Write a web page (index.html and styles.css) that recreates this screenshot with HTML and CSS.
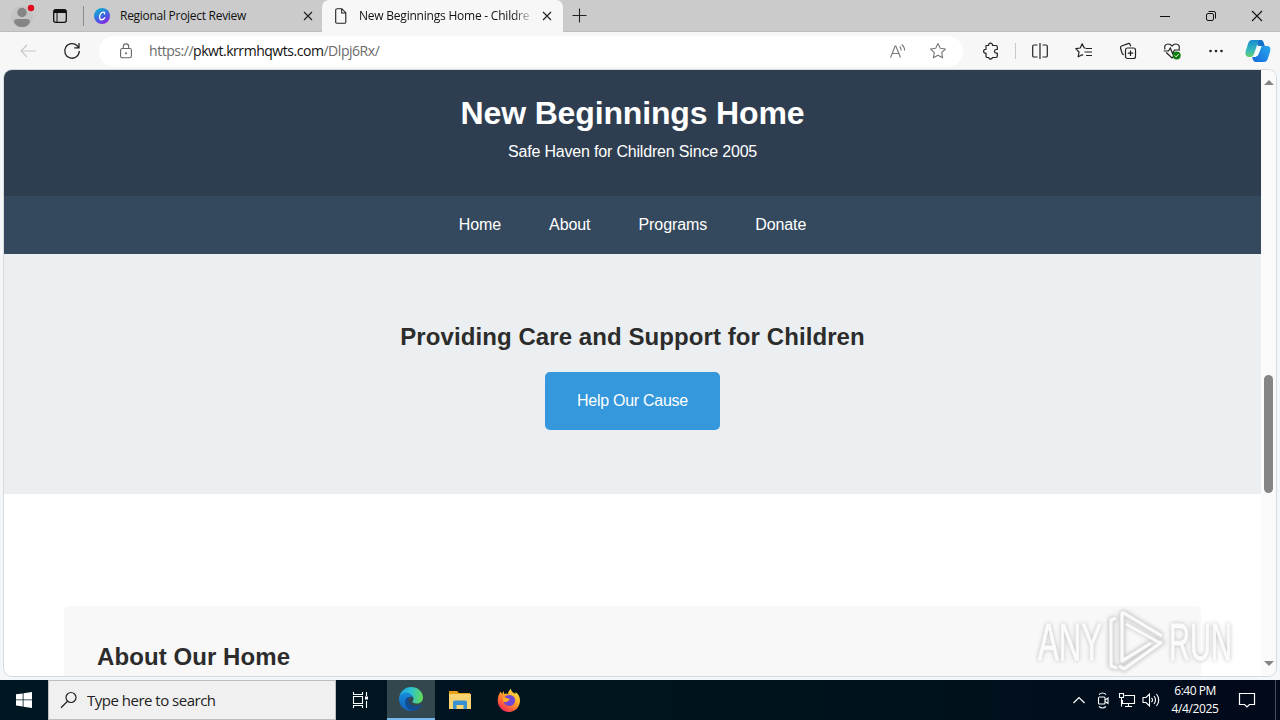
FILE: index.html
```html
<!DOCTYPE html>
<html lang="en">
<head>
<meta charset="utf-8">
<title>New Beginnings Home - Children</title>
<link rel="stylesheet" href="styles.css">
</head>
<body>
<div class="desktop">
  <div class="titlebar">
    <svg class="profile" width="28" height="32" viewBox="0 0 28 32"><circle cx="14" cy="17" r="11" fill="#c4c4c4"/><circle cx="14" cy="12.500" r="4.700" fill="#858585"/><path d="M6 22q0-3 3-3h10q3 0 3 3-2 5-8 5t-8-5z" fill="#858585"/><circle cx="23" cy="8" r="3.200" fill="#e00b1c"/></svg>
    <svg class="workspaces" width="16" height="16" viewBox="0 0 16 16"><rect x="1.700" y="1.700" width="12.600" height="12.600" rx="2" fill="none" stroke="#111" stroke-width="1.300"/><path d="M2 2h12v3H2zM2 4h3v1H2z" fill="#111"/><path d="M5 5v9" stroke="#111"/></svg>
    <span class="tab-divider"></span>
    <div class="tab">
      <svg class="favicon" width="16" height="16" viewBox="0 0 16 16"><defs><linearGradient id="canva" x1="0" y1="0" x2=".6" y2="1"><stop offset="0" stop-color="#08c3cc"/><stop offset=".5" stop-color="#2f77df"/><stop offset="1" stop-color="#8129e5"/></linearGradient></defs><circle cx="8" cy="8" r="8" fill="url(#canva)"/><path d="M10.500 5.800c.6-1.600-1.200-2.300-2.700-1.200C5.700 6.100 5 9.200 6 10.800s3.200 1 4.700-1" fill="none" stroke="#fff" stroke-width="1.300" stroke-linecap="round"/></svg>
      <span class="tab-title tab-title-first">Regional Project Review</span>
      <svg class="tab-close" width="10" height="10" viewBox="0 0 10 10"><path d="M1 1l8 8M9 1L1 9" stroke="#222" stroke-width="1.200"/></svg>
    </div>
    <div class="tab tab-active">
      <svg class="favicon" width="16" height="16" viewBox="0 0 16 16"><path d="M3.500.7h5.300l4 4v9.200q0 1.400-1.400 1.400h-7.400Q2.700 15.300 2.700 14V2q0-1.300 1.300-1.300M8.700.8V5h4" fill="none" stroke="#222" stroke-width="1.100"/></svg>
      <span class="tab-title tab-title-page">New Beginnings Home - Childre</span>
      <svg class="tab-close" width="10" height="10" viewBox="0 0 10 10"><path d="M1 1l8 8M9 1L1 9" stroke="#222" stroke-width="1.200"/></svg>
    </div>
    <svg class="new-tab" width="15" height="15" viewBox="0 0 15 15"><path d="M7.500.5v14M.5 7.500h14" stroke="#222" stroke-width="1.100"/></svg>
    <div class="window-controls">
      <svg width="12" height="12" viewBox="0 0 12 12"><path d="M1 6.500h10" stroke="#111"/></svg>
      <svg width="12" height="12" viewBox="0 0 12 12"><rect x="1.500" y="3.500" width="7" height="7" rx="1.500" fill="none" stroke="#111"/><path d="M3.500 1.500H9q1.500 0 1.500 1.500v5.500" fill="none" stroke="#111"/></svg>
      <svg width="12" height="12" viewBox="0 0 12 12"><path d="M1 1l10 10M11 1L1 11" stroke="#111" stroke-width="1.100"/></svg>
    </div>
  </div>

  <div class="toolbar">
    <svg class="back" width="18" height="14" viewBox="0 0 18 14"><path d="M17 7H2M8 1L2 7l6 6" fill="none" stroke="#c8c8c8" stroke-width="1.200"/></svg>
    <svg class="reload" width="18" height="18" viewBox="0 0 18 18"><path d="M16.300 9A7.300 7.300 0 1 1 14.200 3.800L16 5.600M16 1v4.800h-4.800" fill="none" stroke="#222" stroke-width="1.300"/></svg>
    <div class="address">
      <svg class="lock" width="14" height="16" viewBox="0 0 14 16"><rect x="1.600" y="5.500" width="10.800" height="9.300" rx="1.800" fill="none" stroke="#666" stroke-width="1.100"/><path d="M4.300 5.500V3.600a2.700 2.700 0 0 1 5.400 0v1.900" fill="none" stroke="#666" stroke-width="1.100"/><circle cx="7" cy="10.200" r="1" fill="#666"/></svg>
      <span class="url"><span class="url-scheme">https://</span><b>pkwt.krrmhqwts.com</b><span class="url-path">/Dlpj6Rx/</span></span>
      <svg class="read-aloud" width="18" height="16" viewBox="0 0 18 16"><path d="M1.500 14.500L6.200 3h.6l4.700 11.500M3.200 10.500h6.600M10.700 3.500q1.500 1.500 1.400 4M12.700 1.500q3 2.500 2.900 6" fill="none" stroke="#777" stroke-width="1.100"/></svg>
      <svg width="18" height="18" viewBox="0 0 18 18"><path d="M9 1.600l2.300 4.700 5.100.7-3.700 3.600.9 5.100L9 13.300l-4.600 2.400.9-5.100L1.600 7l5.100-.7z" fill="none" stroke="#777" stroke-width="1.100" stroke-linejoin="round"/></svg>
    </div>
    <svg class="extensions" width="18" height="18" viewBox="0 0 18 18"><path d="M4 3.500h2.600a2 2 0 1 1 3.900 0H14q1.300 0 1.300 1.300v2.700h-1a1.800 1.800 0 0 0 0 3.600h1v3q0 1.400-1.300 1.400h-3.500a2 2 0 0 1-3.900 0H5.300Q4 15.500 4 14.200v-3a2 2 0 1 1 0-3.900z" fill="none" stroke="#222" stroke-width="1.200" stroke-linejoin="round"/></svg>
    <span class="tool-divider"></span>
    <div class="tools">
      <svg width="18" height="18" viewBox="0 0 18 18"><path d="M6.500 3H3Q1.700 3 1.700 4.300v9.400Q1.700 15 3 15h3.500M11.500 3H15q1.300 0 1.300 1.300v9.400Q16.300 15 15 15h-3.500M9 1v16" fill="none" stroke="#222" stroke-width="1.200"/></svg>
      <svg width="18" height="18" viewBox="0 0 18 18"><path d="M10.500 6H9.200L7.200 1.800 5.200 6l-4.400.7L4 10l-.8 4.800 4-2.100 1 .5M17 6.500h-6.300M17 10H9.500M17 13.500h-6" fill="none" stroke="#222" stroke-width="1.200" stroke-linejoin="round"/></svg>
      <svg width="18" height="18" viewBox="0 0 18 18"><rect x="6.500" y="6" width="10" height="10.500" rx="2" fill="none" stroke="#222" stroke-width="1.200"/><path d="M11.500 8.500v5.500M8.800 11.200h5.400M4.800 12.700q-1.300-.3-1.700-1.500L1.500 6Q1.200 4.500 2.500 4l6.700-2.400q1.400-.5 1.900.9l.7 1.800" fill="none" stroke="#222" stroke-width="1.200"/></svg>
      <svg width="18" height="18" viewBox="0 0 18 18"><path d="M2 7.500C.6 4 3 2 5 2q2.500 0 4 2 1.500-2 4-2c2 0 4.400 2 3 5.500M3.200 10.500L9 16l1.500-1.500M.7 9h4.800L7.300 6l2.300 5.500L11.500 8h5.600" fill="none" stroke="#222" stroke-width="1.200"/><circle cx="13.700" cy="13.500" r="4" fill="#107c10"/><path d="M11.800 13.500l1.300 1.300 2.500-2.600" fill="none" stroke="#fff"/></svg>
      <svg width="18" height="18" viewBox="0 0 18 18"><g fill="#222"><circle cx="3.500" cy="9" r="1.300"/><circle cx="9" cy="9" r="1.300"/><circle cx="14.500" cy="9" r="1.300"/></g></svg>
    </div>
    <svg class="copilot" width="26" height="24" viewBox="0 0 26 24"><defs><linearGradient id="cpa" x1="0" y1="0" x2="0" y2="1"><stop offset="0" stop-color="#178bd0"/><stop offset=".6" stop-color="#35b9bd"/><stop offset="1" stop-color="#66d06b"/></linearGradient><linearGradient id="cpb" x1="0" y1="1" x2="1" y2="0"><stop offset="0" stop-color="#1665dc"/><stop offset="1" stop-color="#29b5ef"/></linearGradient></defs><path d="M14 1h2q2 0 3 4l.6 2H22c3 0 4 2 3 6l-2 6q-1 4-4 4h-8c-3 0-3-3-4-5h4z" fill="url(#cpb)"/><path d="M7 1h8q-2 1-3 5l-3 9q-1 3-3 3H4c-4 0-4-4-3-7l2-6q1-4 4-4z" fill="url(#cpa)"/><path d="M14 1h2q2 0 3 4l.6 2H15l-3-1q.5-3 2-5z" fill="#1672c7"/><path d="M13 7h3.700l-3 8q-1 2.500-3 2.500H8.500q1.200-1 1.700-2.500z" fill="#f5fcff"/></svg>
  </div>

  <div class="viewport">
    <div class="page">
      <header class="site-header">
        <h1>New Beginnings Home</h1>
        <p>Safe Haven for Children Since 2005</p>
      </header>
      <nav class="site-nav"><a>Home</a><a>About</a><a>Programs</a><a>Donate</a></nav>
      <section class="hero">
        <h2>Providing Care and Support for Children</h2>
        <a class="cta">Help Our Cause</a>
      </section>
      <section class="about"><h2>About Our Home</h2></section>
    </div>
    <div class="scrollbar">
      <span class="arrow-up"></span>
      <span class="thumb"></span>
      <span class="arrow-down"></span>
    </div>
  </div>

  <div class="taskbar">
    <div class="start"><svg width="16" height="16" viewBox="0 0 16 16" fill="#fff"><path d="M0 2.300l6.700-.9v6.100H0zM7.500 1.300L16 0v7.500H7.500zM0 8.300h6.700v6.200L0 13.600zM7.500 8.300H16V16l-8.500-1.300z"/></svg></div>
    <div class="search">
      <svg width="18" height="18" viewBox="0 0 18 18"><circle cx="11" cy="6.500" r="5" fill="none" stroke="#222" stroke-width="1.200"/><path d="M7.500 10.200L1 16.700" stroke="#222" stroke-width="1.300"/></svg>
      <span>Type here to search</span>
    </div>
    <div class="app"><svg width="18" height="18" viewBox="0 0 18 18"><path d="M1.500 1v2.500h9V1M1.500 17v-2.500h9V17M1.500 5.500h9v7h-9zM14.500 1v4M14.500 10v7" fill="none" stroke="#fff" stroke-width="1.100"/><path d="M13 5.500h3v3h-3z" fill="#fff"/></svg></div>
    <div class="app app-active"><svg width="26" height="26" viewBox="0 0 26 26"><defs><linearGradient id="eda" x1="0" y1=".3" x2="1" y2=".4"><stop offset="0" stop-color="#1b9de2"/><stop offset=".5" stop-color="#2fc2cb"/><stop offset="1" stop-color="#62d958"/></linearGradient><linearGradient id="edb" x1="0" y1="0" x2="0" y2="1"><stop offset="0" stop-color="#168bdc"/><stop offset="1" stop-color="#1361b5"/></linearGradient></defs><path d="M1.200 12C2 5 7 1 13 1c7 0 12 5 12 10.500 0 4-3 6-6.500 6-3 0-4.500-1.200-4-2 1.700-2 1.200-4-.2-5.300C11 7 4 7.500 1.200 12z" fill="url(#eda)"/><path d="M1 13c0-4 4-6.200 7.500-6.200 4 0 6.700 2.700 6.500 5.400-.2-1.200-2-2-3.500-1-3 2-2 9 5 9.300 3 .1 5-1 6.300-1.800.5-.2.800 0 .5.500C21 23 17.300 25 13 25 6 25 1 19.500 1 13z" fill="url(#edb)"/><path d="M8.500 12c-4 6 1 12 6.500 12.800 3.500-.4 6.500-2.500 8.200-5.400.3-.6 0-.9-.5-.6-5 3-12.200 1-12.200-4.800q0-2 1-3-2 0-3 1z" fill="#124c91"/></svg></div>
    <div class="app"><svg width="22" height="20" viewBox="0 0 22 20"><path d="M0 1h8l2 2h11v4H0z" fill="#e9a319"/><path d="M0 4h22v15H0z" fill="#f9d470"/><path d="M4 19v-7q0-1.500 1.500-1.500h11q1.500 0 1.500 1.500v7h-3.500v-4h-7v4z" fill="#3a91d2"/></svg></div>
    <div class="app"><svg width="24" height="24" viewBox="0 0 24 24"><defs><linearGradient id="ffx" x1=".9" y1="0" x2=".2" y2="1"><stop offset="0" stop-color="#fff04f"/><stop offset=".4" stop-color="#ffae27"/><stop offset=".7" stop-color="#ff6638"/><stop offset="1" stop-color="#ed1d63"/></linearGradient></defs><path d="M3.500 3.500L5 6q1-2 2-3v3q2-.8 4 0 .2-3 3-5.500 0 3 3 4.500 1 .3 1.500 1V4c3 2 4.500 5 4.500 8.500C23 19 18 24 12 24S.7 19 .7 12.700C.7 9 2 6 3.500 3.500z" fill="url(#ffx)"/><path d="M7 9.500q2.500-3.500 7-2.300c3 .8 4.500 3 4 6-.5 3-3 5-6 4.800-3-.1-5-2-5.200-4.500 1.500 1 3 .8 4-.5 1-.8 2-.8 2-1.500-2 0-3.500-1.500-5.800-2z" fill="#7148d4"/><path d="M6 9.500q2.500-.5 4 .8l2.700.7c0 1-1.500 1.200-2 2-1.300 1.500-3 1-4.500.5z" fill="#ffad28"/></svg></div>
    <div class="tray">
      <svg width="14" height="18" viewBox="0 0 14 18"><path d="M1.500 12L7 6.500l5.500 5.500" fill="none" stroke="#fff" stroke-width="1.200"/></svg>
      <svg width="14" height="18" viewBox="0 0 14 18"><rect x="2.500" y="6" width="6.500" height="7" rx="1" fill="none" stroke="#fff" stroke-width="1.100"/><path d="M9 9l3-2v5.500l-3-2M3 3.500q3.500-3 7 0M3 15.500q3.500 3 7 0" fill="none" stroke="#fff" stroke-width="1.100"/></svg>
      <svg class="network" width="18" height="18" viewBox="0 0 18 18"><path d="M6.500 4.500h10v8h-12V9M10.500 12.500v3M7 15.500h7M1.500 2.500h4v4h-4zM3.500 6.500v9" fill="none" stroke="#fff" stroke-width="1.100"/></svg>
      <svg class="volume" width="18" height="18" viewBox="0 0 18 18"><path d="M1 6.500h3L7.500 3v12L4 11.500H1zM9.500 7q2 2 0 4M12 5q3 4 0 8M14.500 3q4.500 6 0 12" fill="none" stroke="#fff" stroke-width="1.100"/></svg>
      <div class="clock"><span class="time">6:40 PM</span><span class="date">4/4/2025</span></div>
      <svg class="notify" width="18" height="18" viewBox="0 0 18 18"><path d="M1.500 2.500h15v11h-5L9 16l-2.500-2.500h-5z" fill="none" stroke="#fff" stroke-width="1.200"/></svg>
      <span class="show-desktop"></span>
    </div>
  </div>

  <svg class="watermark" width="220" height="72" viewBox="0 0 220 72">
    <g class="mark-text"><text x="8" y="56" textLength="64" lengthAdjust="spacingAndGlyphs">ANY</text><text x="139" y="56" textLength="63" lengthAdjust="spacingAndGlyphs">RUN</text></g>
    <path class="mark-edge" d="M86 14l-5 2v46l6 2M92 8v49l29-18M92 8l40 24M121 39l11-1L94 65l-5-3"/>
    <path class="mark-line" d="M86 14l-5 2v46l6 2M92 8v49l29-18M92 8l40 24M96 20l34 19M132 38L94 65l-5-3"/>
  </svg>
</div>
</body>
</html>
```

FILE: styles.css
```css
* { box-sizing: border-box; }
body { margin: 0; overflow: hidden; }
svg { display: block; flex: none; }
.desktop { position: relative; width: 1280px; height: 720px; display: flex; flex-direction: column; background: #f4f7f9; font-family: "Open Sans", "Noto Sans", sans-serif; }

.titlebar { height: 32px; flex: none; display: flex; align-items: center; background: #cbcbcb; border-bottom: 1px solid #bdbdbd; }
.profile { margin-left: 8px; }
.workspaces { margin-left: 16px; }
.tab-divider { width: 1px; height: 20px; margin-left: 15px; background: #8c8c8c; }
.tab { height: 32px; width: 238px; display: flex; align-items: center; padding-left: 10px; }
.tab-active { width: 241px; padding-left: 11px; margin-bottom: -1px; background: #f7f7f7; border-radius: 7px 7px 0 0; }
.tab-title { margin-left: 10px; font-size: 12px; line-height: 16px; color: #111; white-space: nowrap; }
.tab-title-first { width: 182px; letter-spacing: -0.28px; }
.tab-title-page { width: 176px; letter-spacing: -0.22px; -webkit-mask-image: linear-gradient(90deg, #000 154px, transparent 175px); mask-image: linear-gradient(90deg, #000 154px, transparent 175px); }
.tab-close { margin-left: auto; margin-right: 11px; }
.tab:not(.tab-active) .tab-close { margin-right: 9px; }
.new-tab { margin-left: 9px; }
.window-controls { margin-left: auto; margin-right: 17px; display: flex; gap: 34px; }

.toolbar { height: 38px; flex: none; display: flex; align-items: center; background: #f7f7f7; }
.back { margin-left: 19px; }
.reload { margin-left: 26px; }
.address { width: 864px; height: 31px; margin-left: 18px; padding: 0 16px 0 20px; display: flex; align-items: center; background: #fff; border-radius: 16px; }
.url { margin-left: 16px; margin-right: auto; font-size: 14px; line-height: 20px; letter-spacing: -0.46px; color: #6b6b6b; white-space: nowrap; }
.url b { font-weight: 400; color: #111; }
.read-aloud { margin-right: 22px; }
.extensions { margin-left: 19px; }
.tool-divider { width: 1px; height: 16px; margin-left: 15px; background: #c8c8c8; }
.tools { margin-left: 15px; display: flex; gap: 26px; }
.copilot { margin-left: 20px; }

.viewport { height: 606px; flex: none; margin: 0 4px 4px; display: flex; overflow: hidden; background: #fff; border-radius: 8px; box-shadow: 0 0 0 1px #d8dadb; }
.page { width: 1257px; font-family: "Liberation Sans", Arial, sans-serif; color: #2c2c2c; }
.site-header { height: 126px; padding-top: 18px; background: #2e3e50; color: #fff; text-align: center; }
.site-header h1 { margin: 0; font-size: 32px; line-height: 51px; letter-spacing: -0.15px; }
.site-header p { margin: 0; font-size: 16px; line-height: 26px; letter-spacing: -0.18px; }
.site-nav { height: 58px; display: flex; justify-content: center; align-items: center; gap: 48px; background: #35495e; color: #fff; font-size: 16px; letter-spacing: -0.08px; }
.hero { height: 240px; padding-top: 64px; display: flex; flex-direction: column; align-items: center; background: #ebeff1; }
.hero h2, .about h2 { margin: 0; font-size: 24px; line-height: 38px; letter-spacing: 0.08px; }
.cta { width: 175px; height: 58px; margin-top: 16px; display: flex; align-items: center; justify-content: center; background: #3598dc; color: #fff; border-radius: 5px; font-size: 16px; letter-spacing: -0.27px; }
.about { height: 120px; margin: 112px 60px 0; padding: 32px 33px; background: #f8f8f8; border-radius: 5px; }
.scrollbar { width: 15px; display: flex; flex-direction: column; align-items: center; background: #fafafa; }
.arrow-up, .arrow-down { border: 5px solid transparent; }
.arrow-up { margin-top: 5px; border-bottom-color: #858585; }
.thumb { width: 9px; height: 118px; margin-top: 290px; border-radius: 5px; background: #858585; }
.arrow-down { margin-top: 168px; border-top-color: #858585; }

.taskbar { height: 40px; flex: none; display: flex; background: linear-gradient(90deg, #001721, #00131d 70%, #02091b); color: #fff; }
.start { width: 48px; display: flex; align-items: center; justify-content: center; }
.search { width: 288px; display: flex; align-items: center; padding-left: 11px; background: #f0f0f0; border: 1px solid #bdbdbd; color: #222; font-size: 15px; }
.search span { margin-left: 9px; letter-spacing: -0.5px; white-space: nowrap; }
.app { width: 49px; display: flex; align-items: center; justify-content: center; }
.app:nth-child(3) { width: 51px; padding-right: 2px; }
.app-active { width: 48px; background: #33474f; border-bottom: 2px solid #76b9ed; }
.tray { margin-left: auto; display: flex; align-items: center; }
.tray svg + svg { margin-left: 10px; }
.tray .network { margin-left: 8px; }
.tray .volume { margin-left: 6px; }
.clock { width: 56px; margin-left: 7px; display: flex; flex-direction: column; align-items: center; font-size: 12px; line-height: 18px; white-space: nowrap; }
.time { letter-spacing: -0.5px; }
.date { letter-spacing: -0.35px; }
.notify { margin-left: 15px; }
.show-desktop { width: 1px; height: 40px; margin-left: 19px; margin-right: 4px; background: #435058; }

.watermark { position: absolute; left: 1030px; top: 604px; filter: drop-shadow(0 0 2px #bbb); }
.mark-text { font: 400 51px "Liberation Sans", sans-serif; fill: #fbfbfb; stroke: #fbfbfb; stroke-width: .8px; }
.mark-edge { fill: none; stroke: #dedede; stroke-width: 5px; stroke-linejoin: round; }
.mark-line { fill: none; stroke: #fafafa; stroke-width: 3px; stroke-linejoin: round; }
```
